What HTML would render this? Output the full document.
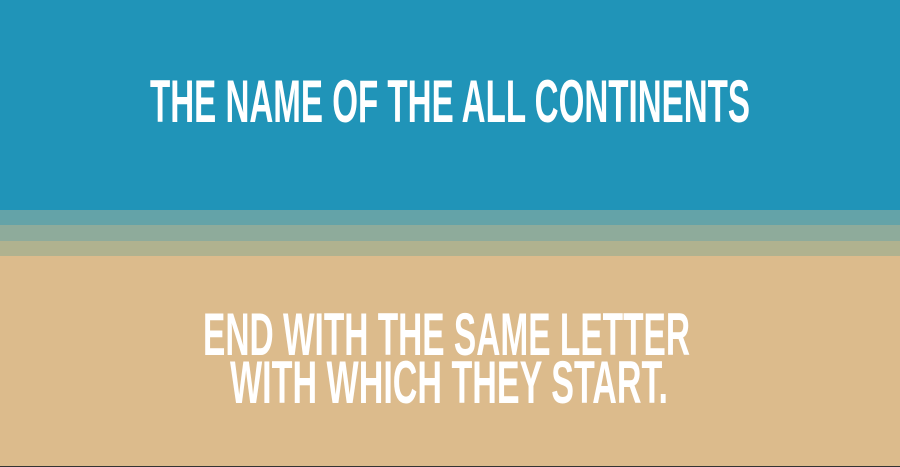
<!DOCTYPE html>
<html><head><style>
html,body{margin:0;padding:0;width:900px;height:467px;overflow:hidden;background:#dcbb8c}
</style></head><body>
<svg width="900" height="467" xmlns="http://www.w3.org/2000/svg" style="display:block">
<rect x="0" y="0" width="900" height="210" fill="#2094b8"/>
<rect x="0" y="210" width="900" height="15" fill="#64a3a8"/>
<rect x="0" y="225" width="900" height="16" fill="#8eab9b"/>
<rect x="0" y="241" width="900" height="15" fill="#b0b28f"/>
<rect x="0" y="256" width="900" height="211" fill="#dcbb8c"/>
<rect x="0" y="466" width="900" height="1" fill="#333"/>
<g font-family="'Liberation Sans Narrow','Liberation Sans',sans-serif" font-weight="bold" font-size="60" fill="#fff">
<text x="150" y="122" textLength="600" lengthAdjust="spacingAndGlyphs">THE NAME OF THE ALL CONTINENTS</text>
<text x="203" y="355" textLength="487" lengthAdjust="spacingAndGlyphs">END WITH THE SAME LETTER</text>
<text x="230" y="403" textLength="438" lengthAdjust="spacingAndGlyphs">WITH WHICH THEY START.</text>
</g>
</svg>
</body></html>
